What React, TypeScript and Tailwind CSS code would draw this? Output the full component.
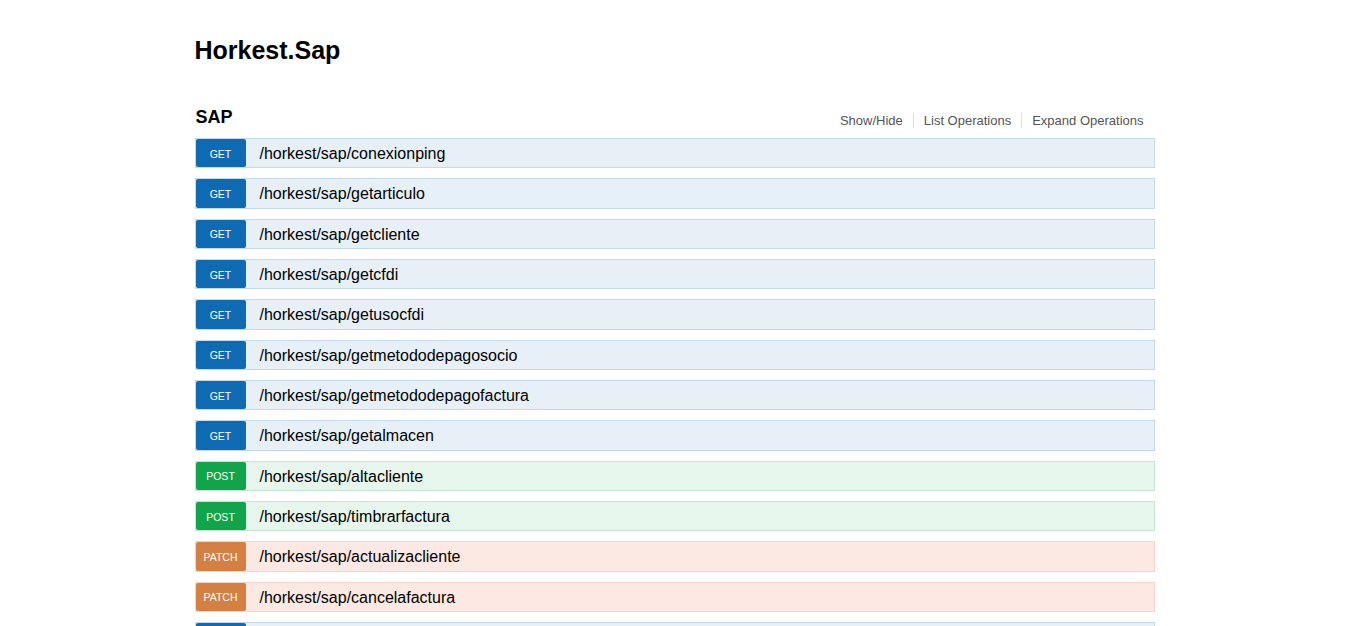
import React from 'react';

type Method = 'GET' | 'POST' | 'PATCH';

interface Operation {
  method: Method;
  path: string;
}

const operations: Operation[] = [
  { method: 'GET', path: '/horkest/sap/conexionping' },
  { method: 'GET', path: '/horkest/sap/getarticulo' },
  { method: 'GET', path: '/horkest/sap/getcliente' },
  { method: 'GET', path: '/horkest/sap/getcfdi' },
  { method: 'GET', path: '/horkest/sap/getusocfdi' },
  { method: 'GET', path: '/horkest/sap/getmetododepagosocio' },
  { method: 'GET', path: '/horkest/sap/getmetododepagofactura' },
  { method: 'GET', path: '/horkest/sap/getalmacen' },
  { method: 'POST', path: '/horkest/sap/altacliente' },
  { method: 'POST', path: '/horkest/sap/timbrarfactura' },
  { method: 'PATCH', path: '/horkest/sap/actualizacliente' },
  { method: 'PATCH', path: '/horkest/sap/cancelafactura' },
  { method: 'GET', path: '/horkest/sap/getfactura' },
  { method: 'GET', path: '/horkest/sap/getpedido' },
];

const styles: Record<Method, { row: string; badge: string }> = {
  GET: { row: 'bg-[#e7f0f7] border-[#c3d9ec]', badge: 'bg-[#0f6ab4]' },
  POST: { row: 'bg-[#e7f6ec] border-[#c3e8d1]', badge: 'bg-[#10a54a]' },
  PATCH: { row: 'bg-[#fce9e3] border-[#f5d5c3]', badge: 'bg-[#d38042]' },
};

const OperationRow: React.FC<{ op: Operation }> = ({ op }) => {
  const s = styles[op.method];
  return (
    <li className={`flex items-center h-[30.33px] mb-[10px] border ${s.row}`}>
      <span
        className={`w-[50px] h-full flex items-center justify-center pt-[3px] rounded-[2px] text-white text-[10.5px] ${s.badge}`}
      >
        {op.method}
      </span>
      <span className="ml-[14px] mt-[2px] text-[16px] text-black leading-none">{op.path}</span>
    </li>
  );
};

const App: React.FC = () => {
  return (
    <div className="min-h-screen bg-white font-['Liberation_Sans',Arial,sans-serif]">
      <div className="w-[960px] mx-auto pt-[35px]">
        <h1 className="text-[25px] leading-[30px] font-bold text-black">Horkest.Sap</h1>

        <div className="mt-[42px] flex items-start justify-between h-[31px]">
          <h2 className="text-[18px] leading-[20px] font-bold text-black ml-[1px]">SAP</h2>
          <ul className="flex mt-[5.5px] text-[13px] leading-[15px] text-[#555] mr-[1px]">
            <li className="px-[10px] border-r border-[#ddd]">Show/Hide</li>
            <li className="px-[10px] border-r border-[#ddd]">List Operations</li>
            <li className="px-[10px]">Expand Operations</li>
          </ul>
        </div>

        <ul>
          {operations.map((op) => (
            <OperationRow key={op.path} op={op} />
          ))}
        </ul>
      </div>
    </div>
  );
};

export default App;
